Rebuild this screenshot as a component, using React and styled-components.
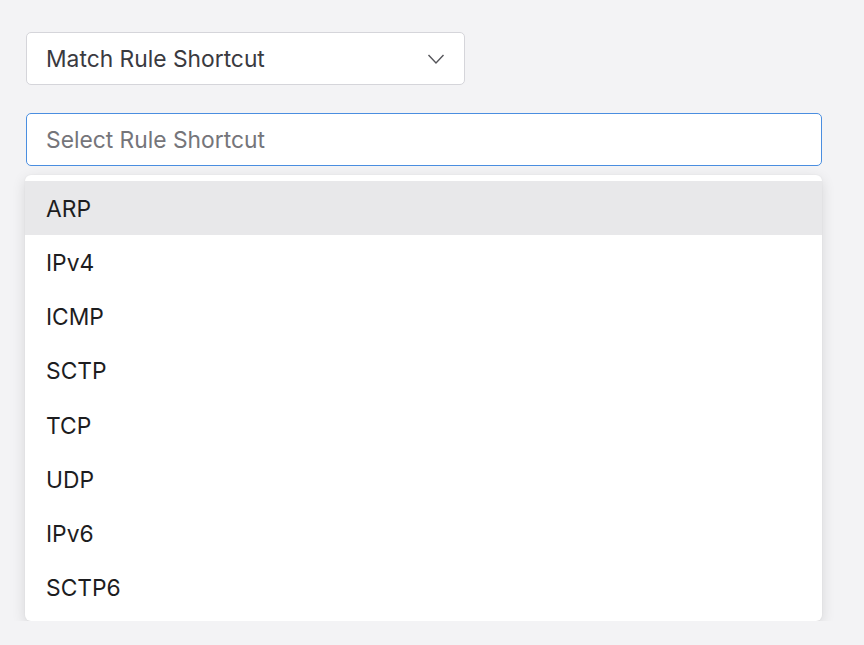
import styled, { createGlobalStyle } from "styled-components";

const Global = createGlobalStyle`
  html, body {
    margin: 0;
    padding: 0;
    background: #f3f3f5;
    font-family: Inter, "Noto Sans", sans-serif;
  }
`;

const Page = styled.div`
  padding: 32px 42px 0 26px;
  display: flex;
  flex-direction: column;
  align-items: flex-start;
`;

const Select = styled.div`
  box-sizing: border-box;
  width: 439px;
  height: 53px;
  display: flex;
  align-items: center;
  justify-content: space-between;
  padding: 0 19px 0 19px;
  background: #fff;
  border: 1px solid #d5d5da;
  border-radius: 5px;
  font-size: 22.8px;
  color: #3a3a3f;
`;

const Input = styled.input`
  box-sizing: border-box;
  margin-top: 28px;
  width: 796px;
  height: 53px;
  padding: 0 19px;
  background: #fff;
  border: 1px solid #4a8ee0;
  border-radius: 5px;
  font-family: inherit;
  font-size: 22.8px;
  color: #1d1d1f;
  outline: none;

  &::placeholder {
    color: #75757a;
  }
`;

const Menu = styled.ul`
  box-sizing: border-box;
  list-style: none;
  margin: 9px 0 0 -1px;
  padding: 6px 0;
  width: 797px;
  background: #fff;
  border-radius: 6px;
  box-shadow: 0 4px 14px rgba(0, 0, 0, 0.12), 0 0 2px rgba(0, 0, 0, 0.06);
`;

const Item = styled.li`
  height: 54.25px;
  display: flex;
  align-items: center;
  padding: 0 21px;
  font-size: 22.8px;
  color: #1d1d1f;
  background: ${(p) => (p.$active ? "#e8e8ea" : "transparent")};
`;

const Chevron = () => (
  <svg width="18" height="12" viewBox="0 0 18 12" fill="none">
    <path d="M1.5 2 L9 10 L16.5 2" stroke="#55555a" strokeWidth="1.4" />
  </svg>
);

const options = ["ARP", "IPv4", "ICMP", "SCTP", "TCP", "UDP", "IPv6", "SCTP6"];

export default function App() {
  return (
    <>
      <Global />
      <Page>
        <Select>
          <span>Match Rule Shortcut</span>
          <Chevron />
        </Select>
        <Input placeholder="Select Rule Shortcut" />
        <Menu>
          {options.map((o, i) => (
            <Item key={o} $active={i === 0}>
              {o}
            </Item>
          ))}
        </Menu>
      </Page>
    </>
  );
}
